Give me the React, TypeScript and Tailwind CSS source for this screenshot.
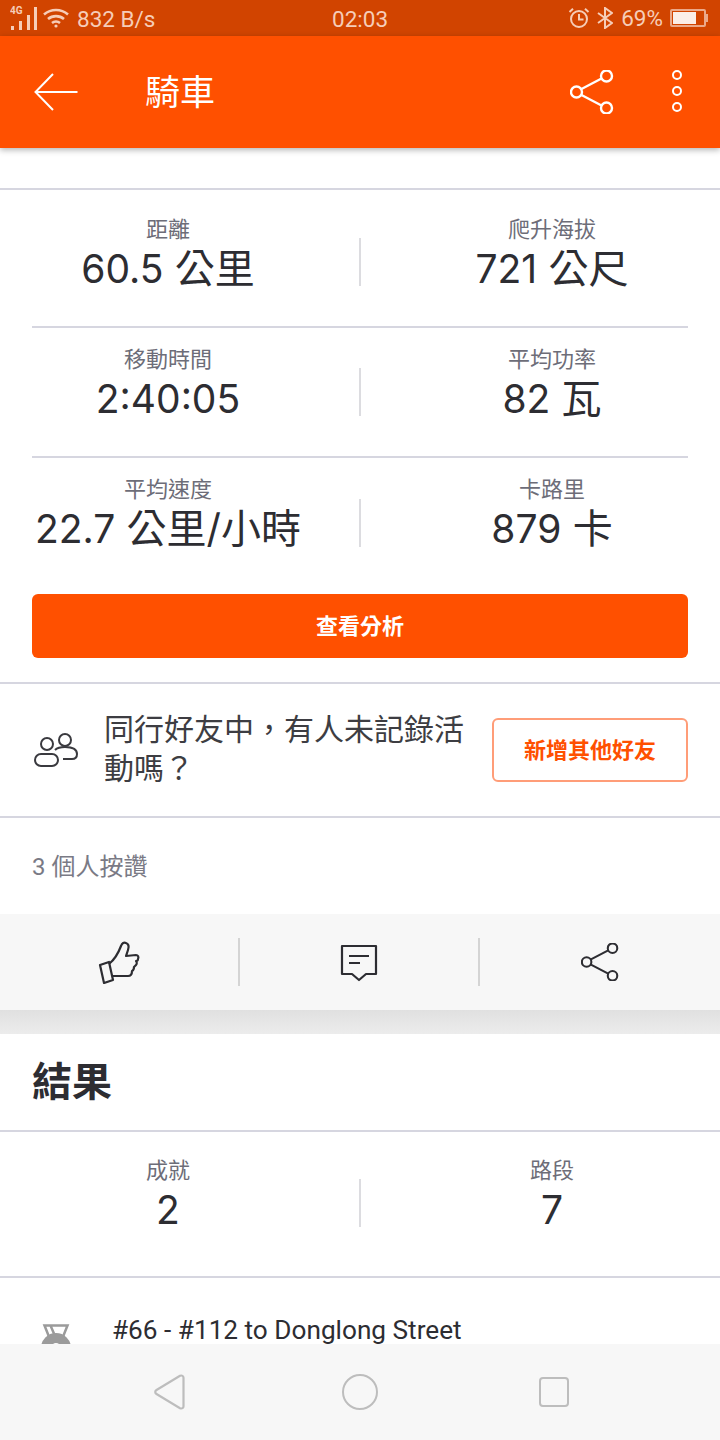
import React from 'react';

const FONT = "font-['Roboto','Noto_Sans_CJK_TC',sans-serif]";

const StatCell: React.FC<{ label: string; value: string; unit?: string }> = ({ label, value, unit }) => (
  <div className="flex flex-col items-center">
    <span className="text-[22px] leading-[28px] text-[#6d6d78]">{label}</span>
    <span className="font-['Inter','Noto_Sans_CJK_TC',sans-serif] text-[39px] leading-[50px] text-[#2d2d32] whitespace-nowrap">
      {value}
      {unit && <span className="text-[40px]"> {unit}</span>}
    </span>
  </div>
);

type Stat = { label: string; value: string; unit?: string };

const StatRow: React.FC<{ left: Stat; right: Stat; className?: string; dividerClass?: string }> = ({ left, right, className, dividerClass }) => (
  <div className={`grid grid-cols-[336px_48px_336px] items-center ${className ?? ''}`}>
    <StatCell {...left} />
    <div className={`mx-auto h-12 w-[2px] bg-[#dcdce0] ${dividerClass ?? 'mt-[14px]'}`} />
    <StatCell {...right} />
  </div>
);

const ShareIcon: React.FC<{ size: number; color: string; stroke: number }> = ({ size, color, stroke }) => (
  <svg width={size} height={size} viewBox="0 0 44 44" fill="none" stroke={color} strokeWidth={stroke}>
    <circle cx="6.5" cy="22" r="5.5" />
    <circle cx="36.5" cy="6" r="5.5" />
    <circle cx="36.5" cy="38" r="5.5" />
    <path d="M11.5 19 31.5 8.5M11.5 25 31.5 35.5" />
  </svg>
);

const StatusBar = () => (
  <div className="flex h-9 items-center justify-between bg-[#d14400] pl-[10px] pr-[10px] text-[22.5px] text-[#f6cdb8]">
    <div className="flex items-center">
      <svg width="28" height="26" viewBox="0 0 28 26" fill="#f6cdb8">
        <text x="0" y="9" fontSize="10" fontWeight="700" fontFamily="Roboto, sans-serif">4G</text>
        <rect x="1" y="21" width="3" height="4" />
        <rect x="9" y="16" width="3" height="9" />
        <rect x="17" y="10" width="3" height="15" />
        <rect x="24" y="2" width="3" height="23" />
      </svg>
      <svg className="ml-[5px]" width="26" height="20" viewBox="0 0 26 20" fill="none" stroke="#f6cdb8" strokeWidth="2.6">
        <path d="M1 6.5c7-6 17-6 24 0M5 11c4.500-3.800 11.500-3.800 16 0M9 15c2.300-1.800 5.700-1.800 8 0" />
        <circle cx="13" cy="18" r="1.600" fill="#f6cdb8" stroke="none" />
      </svg>
      <span className="ml-[8px] mt-[2px] leading-none">832 B/s</span>
    </div>
    <span className="absolute left-[332px] mt-[2px] leading-none">02:03</span>
    <div className="flex items-center">
      <svg width="22" height="22" viewBox="0 0 22 22" fill="none" stroke="#f6cdb8" strokeWidth="2">
        <circle cx="11" cy="12" r="8" />
        <path d="M11 7v5.500h4.500M1.500 5 5 1.800M20.500 5 17 1.800" />
      </svg>
      <svg className="ml-[7px]" width="16" height="22" viewBox="0 0 16 22" fill="none" stroke="#f6cdb8" strokeWidth="2">
        <path d="M1 6l14 10-7 5V1l7 5L1 16" />
      </svg>
      <span className="ml-[8px] leading-none">69%</span>
      <div className="ml-[7px] mr-[2px] flex items-center">
        <div className="h-[18px] w-[36px] rounded-[2px] border-2 border-[#eba98a] p-[1px]">
          <div className="h-full w-[23px] bg-[#fbeee7]" />
        </div>
        <div className="h-2 w-[2px] bg-[#eba98a]" />
      </div>
    </div>
  </div>
);

const AppBar = () => (
  <div className="relative z-10 flex h-[112px] items-center bg-[#ff5000] shadow-[0_2px_6px_rgba(0,0,0,0.3)]">
    <svg className="ml-[34px]" width="44" height="38" viewBox="0 0 44 38" fill="none" stroke="#fff" strokeWidth="2">
      <path d="M19 1 1.500 19 19 37M1.500 19H43.500" />
    </svg>
    <span className="ml-[67px] mt-[2px] text-[35px] leading-none text-white">騎車</span>
    <div className="ml-auto mr-[106px]">
      <ShareIcon size={44} color="#fff" stroke={2.4} />
    </div>
    <div className="absolute right-[38px] -mt-[2px] flex flex-col gap-[6px]">
      <div className="h-[10px] w-[10px] rounded-full border-2 border-white" />
      <div className="h-[10px] w-[10px] rounded-full border-2 border-white" />
      <div className="h-[10px] w-[10px] rounded-full border-2 border-white" />
    </div>
  </div>
);

const NavBar = () => (
  <div className="flex h-24 items-center bg-[#f7f7f7]">
    <svg className="ml-[154px]" width="32" height="36" viewBox="0 0 32 36" fill="none" stroke="#bdbdbd" strokeWidth="2.2">
      <path d="M2.500 16 26 1.800c2-.8 3.500.2 3.500 2v28.400c0 1.800-1.500 2.800-3.500 2L2.500 20c-1.700-1-1.700-3 0-4Z" />
    </svg>
    <div className="ml-[156px] h-9 w-9 rounded-full border-2 border-[#bdbdbd]" />
    <div className="ml-[161px] h-[30px] w-[30px] rounded-[4px] border-2 border-[#bdbdbd]" />
  </div>
);

export default function App() {
  return (
    <div className={`relative flex h-[1440px] w-[720px] flex-col overflow-hidden bg-white ${FONT}`}>
      <StatusBar />
      <AppBar />
      <main className="min-h-0 flex-1 overflow-hidden">
        <div className="mt-10 h-[138px] border-t-2 border-[#d6d6e0] pt-[26px]">
          <StatRow left={{ label: '距離', value: '60.5', unit: '公里' }} right={{ label: '爬升海拔', value: '721', unit: '公尺' }} />
        </div>
        <div className="mx-8 h-[130px] border-t-2 border-[#d6d6e0] pt-[18px]">
          <StatRow className="-mx-8" left={{ label: '移動時間', value: '2:40:05' }} right={{ label: '平均功率', value: '82', unit: '瓦' }} />
        </div>
        <div className="mx-8 h-[138px] border-t-2 border-[#d6d6e0] pt-[18px]">
          <StatRow className="-mx-8" dividerClass="mt-[16px]" left={{ label: '平均速度', value: '22.7', unit: '公里/小時' }} right={{ label: '卡路里', value: '879', unit: '卡' }} />
        </div>
        <div className="mx-8 flex h-16 items-center justify-center rounded-[6px] bg-[#ff5000] text-[22px] font-bold text-white">
          查看分析
        </div>
        <div className="mt-6 flex h-[136px] items-center border-y-2 border-[#d6d6e0] pl-[33px]">
          <svg className="mb-[3px] shrink-0" width="46" height="36" viewBox="0 0 46 36" fill="none" stroke="#3a3a3f" strokeWidth="2">
            <circle cx="14" cy="13" r="6" />
            <circle cx="32" cy="9" r="6" />
            <rect x="2" y="23" width="23" height="12" rx="6" />
            <path d="M22 19c2-2 5-3 10-3 8 0 12 3 12 7 0 3-2 5-5 5h-9" />
          </svg>
          <p className="mb-[2px] ml-[25px] w-[368px] text-[30px] leading-[39px] text-[#3d3d42]">同行好友中，有人未記錄活動嗎？</p>
          <div className="ml-[20px] flex h-16 w-[196px] items-center justify-center rounded-[6px] border-2 border-[#ff9d78] text-[22px] font-bold text-[#ff5000]">
            新增其他好友
          </div>
        </div>
        <div className="flex h-[96px] items-center pl-8 pt-[2px] text-[24px] text-[#7a7a85]">3 個人按讚</div>
        <div className="flex h-24 items-center bg-[#f7f7f7]">
          <div className="flex h-12 w-[240px] items-center justify-center border-r-2 border-[#d4d4d4]">
            <svg width="42" height="44" viewBox="0 0 42 44" fill="none" stroke="#2d2d32" strokeWidth="2.2" strokeLinejoin="round">
              <path d="M2 25 11 22 15 40 6 43Z" />
              <path d="M11 24c5-4 9-10 12-18 1-3 3-4 5-3 3 1 3 4 2 7l-2 6 10-1c2 0 3 2 2 4 0 1-1 2-2 2 1 1 1 3 0 4l-2 2c0 2 0 3-2 4 0 3-1 5-4 5H15" />
            </svg>
          </div>
          <div className="flex h-12 w-[240px] items-center justify-center border-r-2 border-[#d4d4d4]">
            <svg className="mt-[2px]" width="38" height="38" viewBox="0 0 38 38" fill="none" stroke="#2d2d32" strokeWidth="2.2" strokeLinejoin="round">
              <path d="M2 2h34v28H26l-7 6-7-6H2Z" />
              <path d="M9 12h20M9 19h11" />
            </svg>
          </div>
          <div className="flex w-[240px] items-center justify-center">
            <ShareIcon size={38} color="#2d2d32" stroke={2.4} />
          </div>
        </div>
        <div className="h-6 bg-gradient-to-b from-[#e0e0e0] to-[#ececec]" />
        <div className="flex h-[98px] items-center border-b-2 border-[#d6d6e0] pl-8 pt-[2px] text-[40px] font-bold leading-none text-[#2d2d32]">結果</div>
        <div className="h-[146px] border-b-2 border-[#d6d6e0] pt-[25px]">
          <StatRow left={{ label: '成就', value: '2' }} right={{ label: '路段', value: '7' }} />
        </div>
        <div className="flex pl-[41px] pt-[34px]">
          <svg className="mt-[12px] shrink-0" width="30" height="40" viewBox="0 0 30 40">
            <path d="M3.500 1.500h23l-6 15h-11ZM9.500 1.500l6 14" fill="none" stroke="#9b9b9b" strokeWidth="2.5" />
            <circle cx="15" cy="24" r="15" fill="#9b9b9b" />
            <circle cx="15" cy="24" r="5" fill="#fff" />
          </svg>
          <span className="ml-[41px] text-[26.2px] leading-[36px] text-[#2d2d32]">#66 - #112 to Donglong Street</span>
        </div>
      </main>
      <NavBar />
    </div>
  );
}
